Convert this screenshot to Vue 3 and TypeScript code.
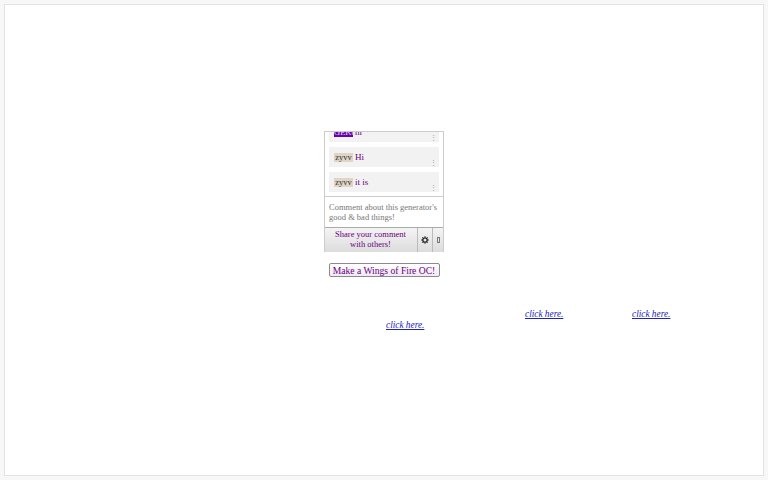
<template>
  <div class="page">
    <div class="panel">
      <section class="comments">
        <div class="list">
          <div v-for="c in comments" :key="c.text" class="comment">
            <span class="name" :class="{ 'name--purple': c.accent }">{{ c.name }}</span>
            <span class="text">{{ c.text }}</span>
            <span class="menu">⋮</span>
          </div>
        </div>
        <div class="input">Comment about this generator's good &amp; bad things!</div>
        <div class="actions">
          <button class="share">Share your comment<br />with others!</button>
          <button class="gear">
            <svg width="8" height="8" viewBox="0 0 8 8"><circle cx="4" cy="4" r="2.2" fill="none" stroke="#222" stroke-width="1.3" /><path d="M4 0v1.5M4 6.5V8M0 4h1.5M6.5 4H8M1.2 1.2l1 1M5.8 5.8l1 1M6.8 1.2l-1 1M2.2 5.8l-1 1" stroke="#222" stroke-width=".8" /></svg>
          </button>
          <button class="more"><span class="tofu"></span></button>
        </div>
      </section>
      <button class="make">Make a Wings of Fire OC!</button>
      <div class="links">
        <div class="line line--first">
          <a href="#">click here.</a>
          <a href="#">click here.</a>
        </div>
        <div class="line line--second">
          <a href="#">click here.</a>
        </div>
      </div>
    </div>
  </div>
</template>

<script setup lang="ts">
const comments = [
  { name: 'GEKo', text: 'hi', accent: true },
  { name: 'zyvv', text: 'Hi', accent: false },
  { name: 'zyvv', text: 'it is', accent: false },
]
</script>

<style>
html, body { margin: 0; background: #f7f7f7; }
</style>

<style scoped>
.page {
  height: 480px; box-sizing: border-box; padding: 4px;
  font-family: "Liberation Serif", serif; color: #6a0080;
}
.panel {
  height: 472px; box-sizing: border-box; background: #fff; border: 1px solid #e2e2e2;
  padding-top: 126px; display: flex; flex-direction: column; align-items: center;
}
.comments {
  width: 120px; box-sizing: border-box; border: 1px solid #ccc; border-bottom: 0; font-size: 9px;
}
.list {
  height: 65px; box-sizing: border-box; overflow: hidden; display: flex; flex-direction: column;
  justify-content: flex-end; gap: 5px; padding: 0 4px 4px; border-bottom: 1px solid #ccc;
}
.comment {
  flex: none; height: 20px; background: #f2f2f2; display: flex; align-items: center;
  padding: 0 4px 0 5px; box-sizing: border-box; gap: 2px; position: relative;
}
.name { width: 19px; text-align: center; background: #dfd5c5; color: #333; font-size: 8.5px; line-height: 9px; }
.name--purple { background: #6a00b0; color: #ddd; }
.menu { position: absolute; right: 2px; bottom: 0; font-size: 7px; line-height: 8px; color: #999; }
.input { height: 30px; box-sizing: border-box; padding: 5px 0 0 4px; line-height: 10px; color: #777; font-size: 8.5px; }
.actions { display: flex; height: 25px; box-sizing: border-box; border-top: 1px solid #aaa; }
.actions button {
  border: 0; border-right: 1px solid #bbb; padding: 0; font: inherit; color: inherit;
  background: linear-gradient(#f4f4f4, #dcdcdc); display: flex; align-items: center; justify-content: center;
}
.share { flex: 1; padding: 0 1px 2px 0 !important; font-size: 8.5px !important; line-height: 10px !important; text-align: center; }
.gear { width: 15px; }
.more { width: 10px; border-right: 0 !important; }
.tofu { width: 3px; height: 6px; border: 1px solid #777; box-sizing: border-box; }
.make {
  margin-top: 11px; width: 111px; height: 14px; padding: 0; box-sizing: border-box; white-space: nowrap;
  font: 9.6px "Liberation Serif", serif; color: #6a0080;
  border: 1px solid #8a8a8a; border-radius: 2px; background: linear-gradient(#fff, #efe9f3);
}
.links { align-self: stretch; margin-top: 32px; font-size: 9.3px; font-style: italic; }
.line { height: 11px; line-height: 11px; display: flex; }
.line a { color: #2222bb; width: 38px; white-space: nowrap; }
.line--first { padding-left: 520px; gap: 69px; }
.line--second { padding-left: 381px; }
</style>
